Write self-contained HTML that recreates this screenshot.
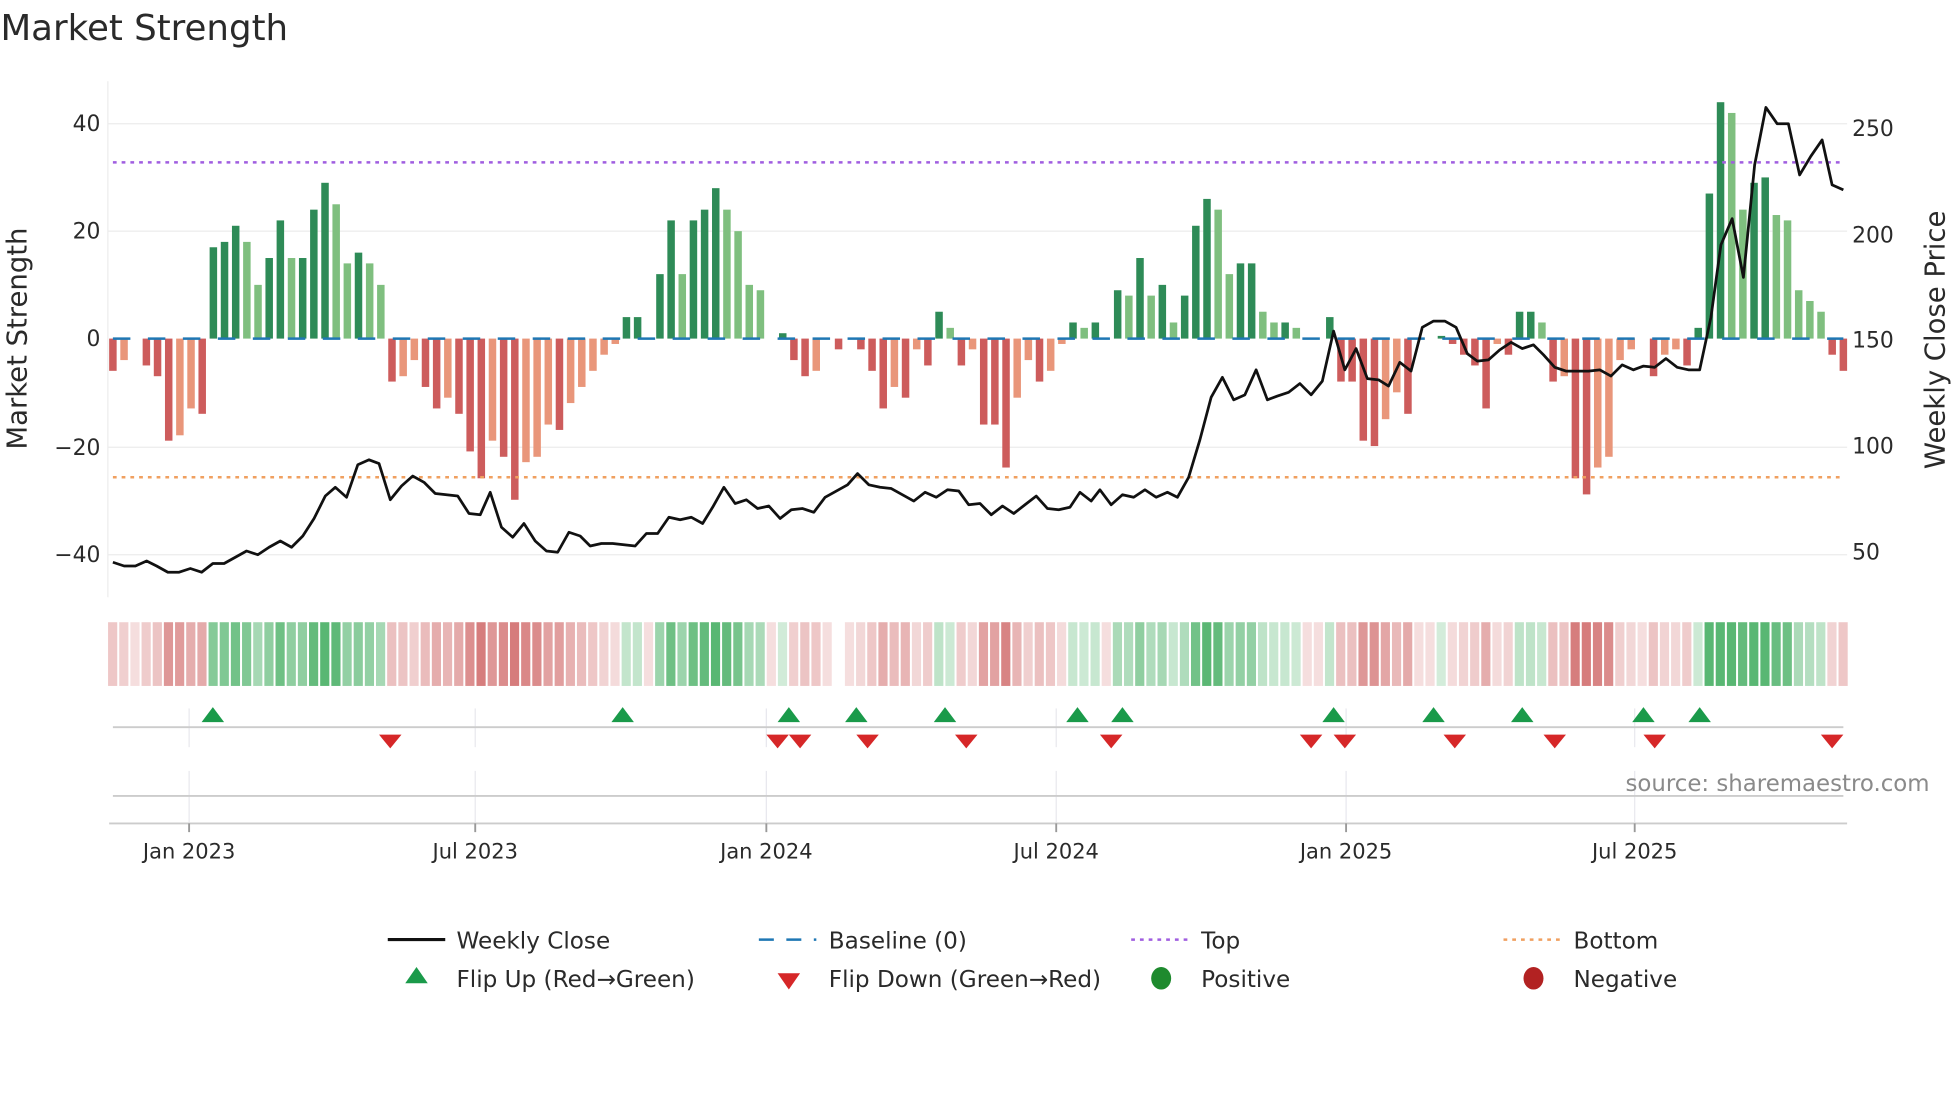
<!DOCTYPE html>
<html><head><meta charset="utf-8"><style>
html,body{margin:0;padding:0;background:#fff;width:1960px;height:1102px;overflow:hidden}
svg{display:block}
text{font-family:"DejaVu Sans","Liberation Sans",sans-serif;fill:#2a2a2a}
</style></head><body>
<svg id="s" width="1960" height="1102" viewBox="0 0 1568 882" xmlns="http://www.w3.org/2000/svg">
<text x="0" y="32" font-size="28.5" fill="#333">Market Strength</text>
<g stroke="#ececec" stroke-width="1">
<line x1="86" y1="99" x2="1478" y2="99"/><line x1="86" y1="185" x2="1478" y2="185"/>
<line x1="86" y1="358" x2="1478" y2="358"/><line x1="86" y1="444" x2="1478" y2="444"/>
<line x1="86" y1="65" x2="86" y2="478"/>
</g>
<g font-size="17.5" text-anchor="end">
<text x="80" y="105">40</text><text x="80" y="191">20</text><text x="80" y="277">0</text>
<text x="80" y="364">−20</text><text x="80" y="450">−40</text>
</g>
<g font-size="17.5">
<text x="1482" y="109">250</text><text x="1482" y="194">200</text><text x="1482" y="278">150</text>
<text x="1482" y="363">100</text><text x="1482" y="448">50</text>
</g>
<text transform="translate(21,271) rotate(-90)" font-size="22" text-anchor="middle">Market Strength</text>
<text transform="translate(1556,272) rotate(-90)" font-size="22" text-anchor="middle">Weekly Close Price</text>
<g id="bars"></g>
<line x1="90" y1="271" x2="1475" y2="271" stroke="#1f77b4" stroke-width="2" stroke-dasharray="14,14"/>
<line x1="90" y1="130" x2="1475" y2="130" stroke="#a05ee0" stroke-width="2" stroke-dasharray="3,4"/>
<line x1="90" y1="382" x2="1475" y2="382" stroke="#f0a060" stroke-width="2" stroke-dasharray="3,4"/>
<polyline id="price" fill="none" stroke="#111" stroke-width="2.2" stroke-linejoin="round"/>
<g id="heat"></g>
<g stroke="#e8e8ee" stroke-width="1">
<line x1="151" y1="567" x2="151" y2="598"/><line x1="380" y1="567" x2="380" y2="598"/><line x1="613" y1="567" x2="613" y2="598"/><line x1="845" y1="567" x2="845" y2="598"/><line x1="1077" y1="567" x2="1077" y2="598"/><line x1="1308" y1="567" x2="1308" y2="598"/>
<line x1="151" y1="617" x2="151" y2="658"/><line x1="380" y1="617" x2="380" y2="658"/><line x1="613" y1="617" x2="613" y2="658"/><line x1="845" y1="617" x2="845" y2="658"/><line x1="1077" y1="617" x2="1077" y2="658"/><line x1="1308" y1="617" x2="1308" y2="658"/>
</g>
<line x1="90" y1="582" x2="1475" y2="582" stroke="#ccc" stroke-width="1.5"/>
<line x1="90" y1="637" x2="1475" y2="637" stroke="#ccc" stroke-width="1.5"/>
<line x1="87" y1="659" x2="1478" y2="659" stroke="#ccc" stroke-width="1.5"/>
<g id="marks"></g>
<g stroke="#999" stroke-width="1.5">
<line x1="151" y1="659" x2="151" y2="666"/><line x1="380" y1="659" x2="380" y2="666"/><line x1="613" y1="659" x2="613" y2="666"/><line x1="845" y1="659" x2="845" y2="666"/><line x1="1077" y1="659" x2="1077" y2="666"/><line x1="1308" y1="659" x2="1308" y2="666"/>
</g>
<g font-size="16.8" text-anchor="middle">
<text x="151" y="687">Jan 2023</text><text x="380" y="687">Jul 2023</text><text x="613" y="687">Jan 2024</text><text x="845" y="687">Jul 2024</text><text x="1077" y="687">Jan 2025</text><text x="1308" y="687">Jul 2025</text>
</g>
<text x="1544" y="633" font-size="18.3" text-anchor="end" style="fill:#8a8a8a">source: sharemaestro.com</text>
<g font-size="18.5">
<line x1="310" y1="752" x2="356" y2="752" stroke="#111" stroke-width="2.5"/><text x="365" y="759">Weekly Close</text>
<line x1="607" y1="752" x2="653" y2="752" stroke="#1f77b4" stroke-width="2" stroke-dasharray="12,10"/><text x="663" y="759">Baseline (0)</text>
<line x1="905" y1="752" x2="951" y2="752" stroke="#a05ee0" stroke-width="2" stroke-dasharray="3,4"/><text x="961" y="759">Top</text>
<line x1="1203" y1="752" x2="1249" y2="752" stroke="#f0a060" stroke-width="2" stroke-dasharray="3,4"/><text x="1259" y="759">Bottom</text>
<polygon points="333,774 342,787 324,787" fill="#1a9a4a"/><text x="365" y="790">Flip Up (Red→Green)</text>
<polygon points="622,779 640,779 631,792" fill="#d62728"/><text x="663" y="790">Flip Down (Green→Red)</text>
<ellipse cx="929" cy="783" rx="8" ry="9" fill="#1e8a2e"/><text x="961" y="790">Positive</text>
<ellipse cx="1227" cy="783" rx="8" ry="9" fill="#b22222"/><text x="1259" y="790">Negative</text>
</g>
</svg>
<script>
var V=[-6,-4,0,-5,-7,-19,-18,-13,-14,
17,18,21,18,10,15,22,15,15,24,29,25,14,16,14,10,
-8,-7,-4,-9,-13,-11,-14,-21,-26,-19,-22,-30,-23,-22,-16,-17,-12,-9,-6,-3,-1,
4,4,0,12,22,12,22,24,28,24,20,10,9,
0,1,-4,-7,-6,0,-2,0,-2,-6,-13,-9,-11,-2,-5,5,2,-5,-2,-16,-16,-24,-11,-4,-8,-6,-1,3,2,3,0,9,8,15,8,10,3,8,21,26,24,12,14,14,5,3,3,2,0,0,4,-8,-8,-19,-20,-15,-10,-14,0,0,0.5,-1,-3,-5,-13,-1,-3,5,5,3,-8,-7,-26,-29,-24,-22,-4,-2,0,-7,-3,-2,-5,2,27,44,42,24,29,30,23,22,9,7,5,-3,-6];
var n=V.length,x0=90,x1=1475,dx=(x1-x0)/(n-1);
var NS="http://www.w3.org/2000/svg";
function el(t,a,p){var e=document.createElementNS(NS,t);for(var k in a)e.setAttribute(k,a[k]);p.appendChild(e);return e;}
var bars=document.getElementById('bars'),heat=document.getElementById('heat');
for(var i=0;i<n;i++){var v=V[i],x=x0+i*dx,p=i?V[i-1]:0;
 var dark=Math.abs(v)>=Math.abs(p)||(v*p<=0);
 var c=v>=0?(dark?'#2e8b57':'#7fbf7f'):(dark?'#cd5c5c':'#e9967a');
 var h=Math.abs(v)*4.3;
 if(h>0.3)el('rect',{x:x-3,y:v>=0?271-h:271,width:6,height:h,fill:c},bars);
 if(x>662&&x<672)continue;
 var a=Math.min(1,0.25+Math.abs(v)/35);
 var hc=v>0?'rgba(60,170,90,'+(a*0.85)+')':'rgba(200,80,80,'+(a*0.75)+')';
 el('rect',{x:x-dx/2+0.6,y:498,width:dx-1.6,height:51,fill:hc},heat);}
var P=[[90,450],[99,453],[108,453],[117,449],[125,453],[134,458],[143,458],[152,455],[161,458],[170,451],[179,451],[188,446],[197,441],[206,444],[215,438],[224,433],[233,438],[242,429],[251,415],[260,397],[268,390],[277,398],[286,372],[295,368],[303,371],[312,400],[321,389],[330,381],[339,386],[348,395],[357,396],[366,397],[375,411],[384,412],[392,394],[401,422],[410,430],[419,419],[428,433],[437,441],[446,442],[455,426],[464,429],[472,437],[481,435],[490,435],[499,436],[508,437],[517,427],[526,427],[535,414],[544,416],[553,414],[562,419],[570,406],[579,390],[588,403],[597,400],[606,407],[615,405],[624,415],[633,408],[642,407],[651,410],[660,398],[669,393],[678,388],[686,379],[695,388],[704,390],[713,391],[722,396],[731,401],[740,394],[749,398],[758,392],[767,393],[775,404],[784,403],[793,412],[802,405],[811,411],[820,404],[829,397],[838,407],[847,408],[856,406],[864,394],[873,401],[880,392],[889,404],[898,396],[907,398],[916,392],[925,398],[934,394],[942,398],[951,382],[960,352],[969,318],[978,302],[987,320],[996,316],[1005,296],[1014,320],[1022,317],[1031,314],[1040,307],[1049,316],[1058,305],[1067,265],[1076,296],[1085,279],[1094,303],[1103,304],[1111,309],[1120,290],[1129,297],[1138,262],[1147,257],[1156,257],[1165,262],[1174,283],[1182,289],[1191,288],[1200,280],[1209,274],[1218,279],[1227,276],[1235,284],[1244,294],[1253,297],[1262,297],[1271,297],[1280,296],[1289,301],[1298,292],[1307,296],[1315,293],[1324,294],[1333,287],[1342,294],[1351,296],[1360,296],[1369,254],[1377,196],[1386,175],[1395,222],[1404,132],[1413,86],[1422,99],[1431,99],[1440,140],[1449,125],[1458,112],[1466,148],[1475,152]];
document.getElementById('price').setAttribute('points',P.map(function(q){return q.join(',')}).join(' '));
var m=document.getElementById('marks');
[170,498,631,685,756,862,898,1067,1147,1218,1315,1360].forEach(function(x){el('polygon',{points:x+',566 '+(x+9)+',578 '+(x-9)+',578',fill:'#1a9a4a'},m);});
[312,622,640,694,773,889,1049,1076,1164,1244,1324,1466].forEach(function(x){el('polygon',{points:(x-9)+',588 '+(x+9)+',588 '+x+',599',fill:'#d62728'},m);});
</script>
</body></html>
